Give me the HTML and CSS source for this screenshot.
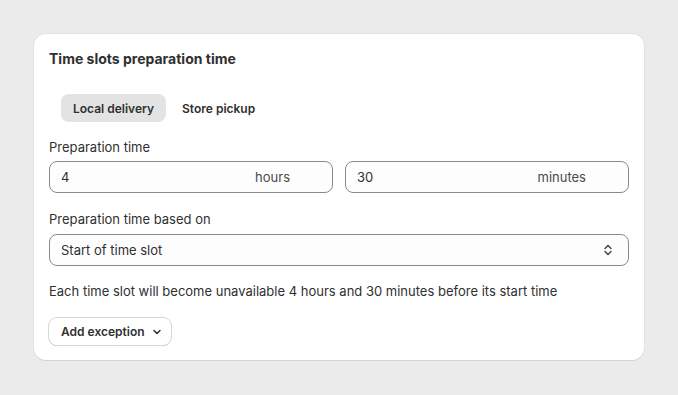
FILE: index.html
```html
<!DOCTYPE html>
<html lang="en">
<head>
    <meta charset="UTF-8">
    <title>Time slots preparation time</title>
    <link rel="stylesheet" href="styles.css">
</head>
<body>
    <div class="card">
        <h2 class="card-title">Time slots preparation time</h2>

        <!-- tabs -->
        <div class="tabs">
            <button class="tab active">Local delivery</button>
            <button class="tab">Store pickup</button>
        </div>

        <div class="field">
            <label class="label">Preparation time</label>
            <div class="row">
                <div class="input">
                    <span class="value">4</span>
                    <span class="suffix">hours</span>
                </div>
                <div class="input">
                    <span class="value">30</span>
                    <span class="suffix">minutes</span>
                </div>
            </div>
        </div>

        <div class="field">
            <label class="label">Preparation time based on</label>
            <div class="input select">
                <span class="value">Start of time slot</span>
                <svg class="select-icon" width="12" height="14" viewBox="0 0 12 14" fill="none" stroke="#4a4a4a" stroke-width="1.5" stroke-linecap="round" stroke-linejoin="round">
                    <path d="M3 5.5 6 2.5 9 5.5"/>
                    <path d="M3 8.5 6 11.5 9 8.5"/>
                </svg>
            </div>
        </div>

        <p class="help">Each time slot will become unavailable 4 hours and 30 minutes before its start time</p>

        <div>
            <button class="btn">Add exception
                <svg width="12" height="12" viewBox="0 0 12 12" fill="none" stroke="#303030" stroke-width="1.5" stroke-linecap="round" stroke-linejoin="round">
                    <path d="M3 4.5 6 7.5 9 4.5"/>
                </svg>
            </button>
        </div>
    </div>
</body>
</html>
```

FILE: styles.css
```css
html, body {
    margin: 0; padding: 0;
    background: #ebebeb;
    font-family: Inter, "Liberation Sans", Arial, sans-serif;
    font-size: 13px; color: #303030;
}
body { padding: 34px; }
.card {
    background: #fff;
    border-radius: 12px;
    box-shadow: 0 1px 0 #d4d4d4, 0 0 0 1px #e3e3e3;
    padding: 15px 15px 15px;
    display: flex; flex-direction: column;
}
.card-title {
    margin: 0; font-size: 14px; font-weight: 650; line-height: 20px;
    color: #303030;
}
.tabs {
    display: flex;
    margin: 25px 0 0 12px;
}
.tab {
    font: inherit; font-size: 12px; font-weight: 600; color: #303030;
    background: transparent; border: 0;
    height: 28px; padding: 0 12px; border-radius: 8px;
    margin-right: 4px;
}
.tab.active { background: #e3e3e3; }
.field { margin-top: 15px; }
.field + .field { margin-top: 16px; }
.label { display: block; line-height: 20px; margin-bottom: 4px; }
.field + .field .label { margin-bottom: 5px; }
.row { display: flex; gap: 12px; }
.input {
    flex: 1;
    height: 32px; box-sizing: border-box;
    border: 1px solid #8a8a8a; border-radius: 8px;
    background: #fdfdfd;
    display: flex; align-items: center;
    padding: 0 42px 0 11px;
}
.input .value { flex: 1; }
.suffix { color: #4a4a4a; }
.select { padding-right: 14px; }
.select-icon { display: block; }
.help { margin: 15px 0 0; line-height: 20px; }
.btn {
    margin-top: 17px;
    font: inherit; font-size: 12px; font-weight: 600; color: #303030;
    background: #fff;
    border: 0; border-radius: 8px;
    box-shadow: 0 0 0 1px #d6d6d6, 0 1px 0 #b5b5b5;
    height: 27px; padding: 0 8px 0 12px;
    display: inline-flex; align-items: center; gap: 6px;
}
```
